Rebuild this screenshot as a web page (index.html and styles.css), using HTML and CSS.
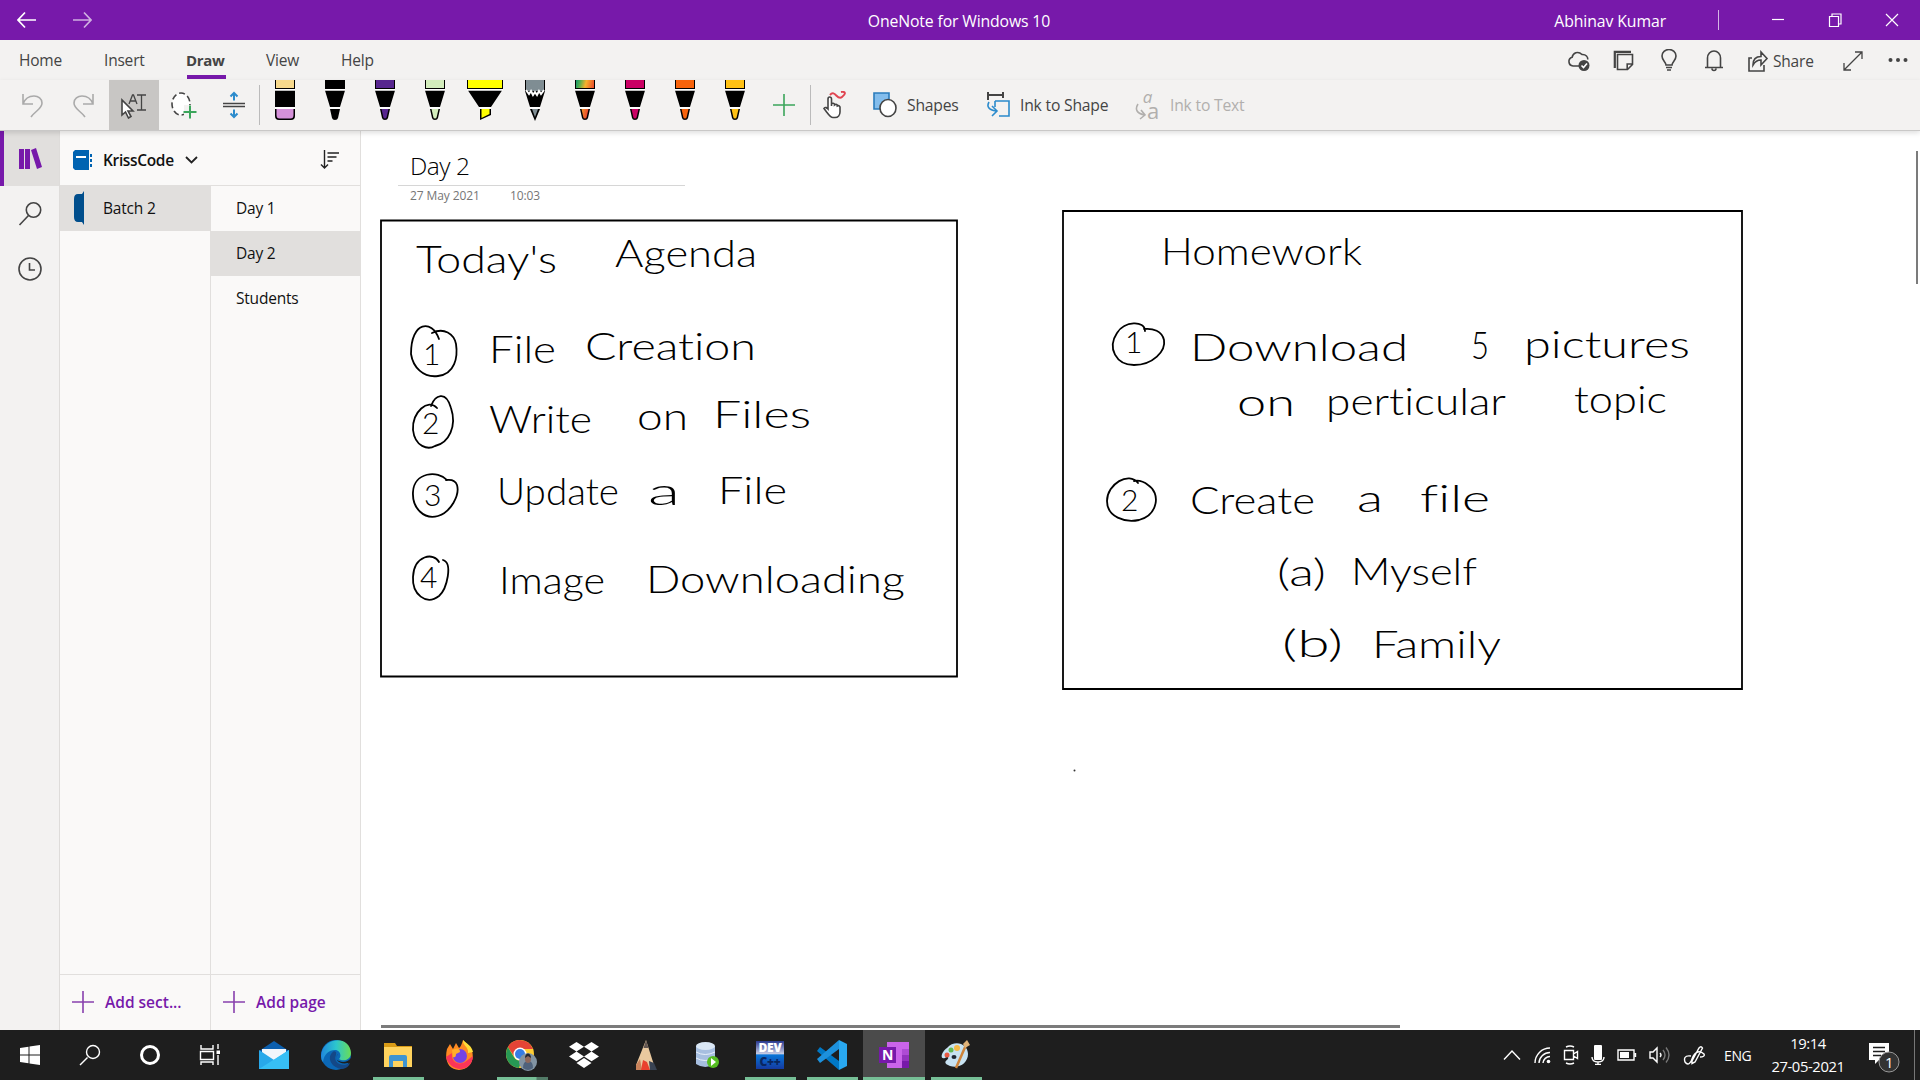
FILE: index.html
```html
<!DOCTYPE html>
<html lang="en">
<head>
<meta charset="utf-8">
<title>OneNote for Windows 10</title>
<link rel="stylesheet" href="styles.css">
</head>
<body>
<div class="app">
  <header class="titlebar">
    <div class="nav">
      <svg width="20" height="18" viewBox="0 0 20 18"><path d="M19 9H1M8 1.500L1 9l7 7.500"/></svg>
      <svg class="dim" width="20" height="18" viewBox="0 0 20 18"><path d="M1 9h18M12 1.500L19 9l-7 7.500"/></svg>
    </div>
    <div class="app-title">OneNote for Windows 10</div>
    <div class="account">Abhinav Kumar</div>
    <div class="window-buttons">
      <i class="divider"></i>
      <svg width="14" height="14" viewBox="0 0 14 14"><path d="M1 6.500h12"/></svg>
      <svg width="14" height="14" viewBox="0 0 14 14"><path d="M1.500 3.500h9v10h-9zM4 3.500V1h9v10h-2.500"/></svg>
      <svg width="14" height="14" viewBox="0 0 14 14"><path d="M1 1l12 12M13 1L1 13"/></svg>
    </div>
  </header>

  <div class="tabs">
    <nav class="tab-list">
      <span class="tab home">Home</span><span class="tab insert">Insert</span><span class="tab draw active">Draw</span><span class="tab view">View</span><span class="tab help">Help</span>
    </nav>
    <div class="tab-tools">
      <svg width="24" height="24" viewBox="0 0 24 24"><path d="M12 17H6a4.500 4.500 0 0 1-.8-8.800C5.800 4 11 1.500 15 5.500c4-.3 6 2.500 5.800 5"/><circle cx="17" cy="16.500" r="5.500" class="fill"/><path class="white" d="M14.500 16.500l2 2 3.500-4"/></svg>
      <svg width="24" height="24" viewBox="0 0 24 24"><path d="M5.500 5.500h15v10l-5 5h-10zM20.500 15h-5.300v5.300"/><path d="M2.800 19V2.800H19" stroke-width="2.200"/></svg>
      <svg width="24" height="24" viewBox="0 0 24 24"><path d="M9 16c0-3-4-4.500-4-9a7 6.500 0 0 1 14 0c0 4.500-4 6-4 9zM9 18.500h6M10 21h4"/></svg>
      <svg width="24" height="24" viewBox="0 0 24 24"><path d="M3 18.500h18M5.500 18.500V9a6.500 7 0 0 1 13 0v9.500M10 19.500a2 2 0 0 0 4 0"/></svg>
      <div class="share"><svg width="22" height="24" viewBox="0 0 22 24"><path d="M5 9H2v13h15v-6M6 16c0-6 3-8.500 8-8.500V3l6 6.500-6 6.500v-5c-4 0-6 1.500-8 5z"/></svg><span>Share</span></div>
      <svg width="24" height="24" viewBox="0 0 24 24"><path d="M3 21L21 3M14 3h7v7M3 14v7h7" stroke-width="1.300"/></svg>
      <svg width="24" height="24" viewBox="0 0 24 24"><g class="fill"><circle cx="4.500" cy="11" r="2"/><circle cx="12" cy="11" r="2"/><circle cx="19.500" cy="11" r="2"/></g></svg>
    </div>
  </div>

  <div class="toolbar">
    <button class="tool faded"><svg width="26" height="28" viewBox="0 0 26 28"><path d="M3 3v10h10M3 13C7 2 22 3 22 12c0 6-7 8-11 14"/></svg></button>
    <button class="tool faded"><svg width="26" height="28" viewBox="0 0 26 28"><path d="M23 3v10H13M23 13C19 2 4 3 4 12c0 6 7 8 11 14"/></svg></button>
    <button class="tool pressed"><svg width="28" height="28" viewBox="0 0 28 28"><path d="M17 4h9M17 19h9M21.500 4v15M9 13l3.500-9h1L17 13M10.500 10h5" stroke-width="1.300"/><path class="cursor" d="M2 9v15l3.500-3 3 6 2.500-1.500-3-5.500h5z"/></svg></button>
    <button class="tool"><svg width="28" height="28" viewBox="0 0 28 28"><ellipse cx="11" cy="13" rx="9" ry="11" stroke-dasharray="6 3" fill="#fff"/><path d="M14 14h12v13H14z" fill="#f3f2f1" stroke="none"/><path class="green" d="M20 14.500v13M13.500 21H26.500" stroke-width="2"/></svg></button>
    <button class="tool"><svg width="24" height="28" viewBox="0 0 24 28"><path d="M1 12.500h22M1 15.500h22"/><path class="blue" d="M12 9.500V2M8.500 5.500L12 2l3.500 3.500M12 18.500V26M8.500 22.500L12 26l3.500-3.500" stroke-width="2"/></svg></button>
    <i class="sep"></i>
    <div class="pens">
      <svg viewBox="0 0 50 41"><path d="M15 0h20v9H15z"/><path d="M16 0h18v8H16z" fill="#f7d98c"/><path d="M15 10.500h20V27H15zM15 29h20v7q0 4-4 4H19q-4 0-4-4z"/><path d="M16.500 29h17v6q0 3.500-3 3.500h-11q-3 0-3-3.500z" fill="#d591d9"/><use href="#bands"/></svg>
      <svg viewBox="0 0 50 41" style="--ink:#000"><use href="#pen"/></svg>
      <svg viewBox="0 0 50 41" style="--ink:#57268f"><use href="#pen"/></svg>
      <svg viewBox="0 0 50 41" style="--ink:#d3edbc"><use href="#pen"/></svg>
      <svg viewBox="0 0 50 41"><path d="M7 0h36v9H7z"/><path d="M8 0h34v8H8z" fill="#ff0"/><path d="M8 10.500h34L31 27H19zM20 29h11v6l-11 5z"/><path d="M21.500 29h8v5l-8 4z" fill="#ff0"/><path d="M7 9h36v1.500H7zM19 27h12v2H19z" fill="#fff"/></svg>
      <svg viewBox="0 0 50 41"><path d="M15 0h20v11l-5 16H20l-5-16z"/><path d="M16 0h18v11H16z" fill="#7f8d93"/><path d="M16 10l3 4 2-3 2 4 2-3 2 3 2-4 2 3 3-4" fill="none" stroke="#fff" stroke-width="2"/><path d="M20 29h10l-5 12z"/><path d="M22 29h6l-3 8z" fill="#7f8d93"/><path d="M19.500 27h11v2h-11z" fill="#fff"/></svg>
      <svg viewBox="0 0 50 41" style="--ink:url(#rainbow)"><use href="#pen"/></svg>
      <svg viewBox="0 0 50 41" style="--ink:#ca0064"><use href="#pen"/></svg>
      <svg viewBox="0 0 50 41" style="--ink:#f7630c"><use href="#pen"/></svg>
      <svg viewBox="0 0 50 41" style="--ink:#ffc114"><use href="#pen"/></svg>
    </div>
    <button class="tool plus"><svg width="24" height="24" viewBox="0 0 24 24"><path class="green" d="M12 1v22M1 12h22"/></svg></button>
    <i class="sep"></i>
    <button class="tool plus"><svg width="26" height="28" viewBox="0 0 26 28"><path d="M6 18V8q0-2 1.700-2t1.800 2v7-2q1.500-1.500 3 0v1q1.500-1.300 2.800 0v1q2-1 2.700 1v5c0 3-2 5.500-5 5.500h-2c-3 0-5-4-9-9 1.500-2 3-.5 4 .5z" fill="#fff"/><path d="M8 4c5-6 7 6 12 2 4-3 4-6-1-5" stroke="#e04450" stroke-width="2"/></svg></button>
    <div class="action shapes"><svg width="24" height="26" viewBox="0 0 24 26"><path d="M1 1h15v16H1z" fill="#83bdec" stroke="#2b7cbc"/><ellipse cx="15" cy="16" rx="8" ry="8.500" fill="#fff"/></svg><span>Shapes</span></div>
    <div class="action ink-shape"><svg width="24" height="26" viewBox="0 0 24 26"><path d="M1 3h17M2 0v8M17 0v6" stroke-width="2"/><path class="blue" d="M9 9h14v15H13M9 9v6M3 10q-4 7 7 9M6 14l5 5-5 5"/></svg><span>Ink to Shape</span></div>
    <div class="action ink-text disabled"><div class="letters"><i>a</i><b>a</b><svg width="12" height="18" viewBox="0 0 12 18"><path d="M3 1q-5 8 6 11M6 7l4 5-5 4"/></svg></div><span>Ink to Text</span></div>
  </div>

  <main class="workspace">
    <aside class="rail">
      <div class="rail-item selected"><svg width="26" height="26" viewBox="0 0 26 26"><path d="M2 3h5v20H2zM8 3h5v20H8zM14 4l5-2 6 19-5 2z" fill="#7719aa" stroke="none"/></svg></div>
      <div class="rail-item"><svg width="26" height="26" viewBox="0 0 26 26"><circle cx="16.500" cy="9" r="7.200"/><path d="M11.500 14.500L2.500 24"/></svg></div>
      <div class="rail-item"><svg width="26" height="26" viewBox="0 0 26 26"><circle cx="13" cy="13" r="11"/><path d="M12.500 7v7H18"/></svg></div>
    </aside>
    <section class="notebook">
      <div class="notebook-head">
        <svg class="book" width="20" height="20" viewBox="0 0 20 20"><path d="M0 2l2-2h14v20H2l-2-2z" fill="#0063b1"/><path d="M3 6h10v2H3z" fill="#fff"/><path d="M17 4h2v3h-2zM17 9h2v3h-2zM17 14h2v3h-2z" fill="#0063b1"/></svg>
        <strong>KrissCode</strong>
        <svg class="chev" width="13" height="8" viewBox="0 0 13 8"><path d="M1 1l5.500 5.500L12 1" stroke-width="1.800"/></svg>
        <svg class="sort" width="20" height="20" viewBox="0 0 20 20"><path d="M4.500 0v18M1 14.500L4.500 18 8 14.500M7.500 3H19M7.500 7h9M7.500 11h5" stroke-width="1.400"/></svg>
      </div>
      <div class="lists">
        <div class="column sections">
          <div class="item selected"><svg width="12" height="34" viewBox="0 0 12 34"><path d="M11 0v34L9 31H5q-4 0-4-5V8q0-5 4-5h4z" fill="#004e8c"/></svg><span>Batch 2</span></div>
          <div class="add"><svg width="22" height="22" viewBox="0 0 22 22"><path d="M11 0v22M0 11h22"/></svg><span>Add sect...</span></div>
        </div>
        <div class="column pages">
          <div class="item">Day 1</div>
          <div class="item selected">Day 2</div>
          <div class="item">Students</div>
          <div class="add"><svg width="22" height="22" viewBox="0 0 22 22"><path d="M11 0v22M0 11h22"/></svg><span>Add page</span></div>
        </div>
      </div>
    </section>
    <section class="page">
      <div class="page-head"><h1>Day 2</h1><div class="meta"><span>27 May 2021</span><span>10:03</span></div></div>
      <svg class="ink" viewBox="361 131 1559 899">
        <g class="stroke">
          <path d="M381 220.500H957V676.500H381z"/>
          <path d="M1063 211H1742V689H1063z"/>
          <path d="M439 339c-7-20-28-18-28 15 2 13 12 24 27 22 17-2 20-19 18-32-2-10-12-17-24-11"/>
          <path d="M437 408c-9-10-25 4-24 22 2 17 15 20 22 16 14-3 22-20 16-38-5-18-16-13-20-2"/>
          <path d="M447 480c-9-10-33-8-34 12-1 16 11 28 25 24 13-4 22-21 19-31-1-3-4-6-11-5"/>
          <path d="M439 562c-5-10-25-7-26 15-1 17 13 29 26 19 8-7 14-33 4-36"/>
          <path d="M1145 331c0-11-21-10-28 2-10 15-1 32 17 32 19 0 32-14 30-25-2-9-11-12-20-11"/>
          <path d="M1138 483c-9-12-31 1-31 18 0 16 18 22 32 19 19-5 22-27 9-35-5-4-9-5-14-4"/>
        </g>
        <g class="hand">
          <text x="416" y="273" textLength="141" lengthAdjust="spacingAndGlyphs">Today's</text><text x="615" y="267" textLength="142" lengthAdjust="spacingAndGlyphs">Agenda</text>
          <text class="num" x="423" y="365">1</text><text x="489" y="363" textLength="67" lengthAdjust="spacingAndGlyphs">File</text><text x="585" y="360" textLength="171" lengthAdjust="spacingAndGlyphs">Creation</text>
          <text class="num" x="422" y="434">2</text><text x="489" y="433" textLength="103" lengthAdjust="spacingAndGlyphs">Write</text><text x="637" y="430" textLength="51" lengthAdjust="spacingAndGlyphs">on</text><text x="713" y="428" textLength="98" lengthAdjust="spacingAndGlyphs">Files</text>
          <text class="num" x="424" y="506">3</text><text x="497" y="505" textLength="122" lengthAdjust="spacingAndGlyphs">Update</text><text x="648" y="505" textLength="32" lengthAdjust="spacingAndGlyphs">a</text><text x="718" y="504" textLength="69" lengthAdjust="spacingAndGlyphs">File</text>
          <text class="num" x="420" y="588">4</text><text x="499" y="594" textLength="106" lengthAdjust="spacingAndGlyphs">Image</text><text x="646" y="593" textLength="259" lengthAdjust="spacingAndGlyphs">Downloading</text>
          <text x="1161" y="265" textLength="201" lengthAdjust="spacingAndGlyphs">Homework</text>
          <text class="num" x="1125" y="353">1</text><text x="1190" y="361" textLength="218" lengthAdjust="spacingAndGlyphs">Download</text><text x="1471" y="359" textLength="18" lengthAdjust="spacingAndGlyphs">5</text><text x="1524" y="358" textLength="166" lengthAdjust="spacingAndGlyphs">pictures</text>
          <text x="1237" y="416" textLength="58" lengthAdjust="spacingAndGlyphs">on</text><text x="1326" y="415" textLength="180" lengthAdjust="spacingAndGlyphs">perticular</text><text x="1574" y="413" textLength="93" lengthAdjust="spacingAndGlyphs">topic</text>
          <text class="num" x="1121" y="511">2</text><text x="1190" y="514" textLength="125" lengthAdjust="spacingAndGlyphs">Create</text><text x="1357" y="512" textLength="26" lengthAdjust="spacingAndGlyphs">a</text><text x="1420" y="512" textLength="70" lengthAdjust="spacingAndGlyphs">file</text>
          <text x="1277" y="586" textLength="49" lengthAdjust="spacingAndGlyphs">(a)</text><text x="1351" y="585" textLength="126" lengthAdjust="spacingAndGlyphs">Myself</text>
          <text x="1282" y="657" textLength="61" lengthAdjust="spacingAndGlyphs">(b)</text><text x="1372" y="658" textLength="129" lengthAdjust="spacingAndGlyphs">Family</text>
        </g>
        <circle cx="1074.500" cy="770.500" r="1" fill="#333"/>
      </svg>
      <i class="vscroll"></i><i class="hscroll"></i>
    </section>
  </main>

  <footer class="taskbar">
    <div class="launch">
      <div class="task sys"><svg width="20" height="20" viewBox="0 0 20 20"><path d="M0 3l8.500-1.200v7.700H0zM9.500 1.600L20 0v9.500H9.500zM0 10.500h8.500v7.700L0 17zM9.500 10.500H20V20L9.500 18.400z" fill="#fff"/></svg></div>
      <div class="task sys"><svg width="22" height="22" viewBox="0 0 22 22"><path d="M8.500 13.500L1 21" class="w"/><circle cx="14" cy="8" r="6.500" class="w"/></svg></div>
      <div class="task sys"><svg width="22" height="22" viewBox="0 0 22 22"><circle cx="11" cy="11" r="8.500" class="w ring"/></svg></div>
      <div class="task sys"><svg width="22" height="22" viewBox="0 0 22 22"><path class="w" d="M2 1v4h12V1M1.500 7.500h13v8h-13zM2 21v-3h12v3M19 0v5M19 11v10"/><path d="M17.500 6.500h3.500v3.500h-3.500z" fill="#fff"/></svg></div>
      <div class="task"><svg width="30" height="30" viewBox="0 0 30 30"><path d="M0 11L15 1l15 10v8H0z" fill="#0c5fae"/><path d="M3 9h24v12H3z" fill="#f2f6fb"/><path d="M0 10l15 10 15-10v19H0z" fill="#28a8ea"/><path d="M30 10v19H0z" fill="#37bff5"/></svg></div>
      <div class="task"><svg width="30" height="30" viewBox="0 0 30 30"><defs><linearGradient id="edge"><stop stop-color="#2086dc"/><stop offset=".5" stop-color="#2cc6ce"/><stop offset="1" stop-color="#6add55"/></linearGradient></defs><circle cx="15" cy="15" r="15" fill="#0b67b5"/><path d="M0 16C1-3 29-6 30 13c0 7-8 9-12 6 3-3 1-9-4-9C8 10 3 14 2 22Q0 20 0 16z" fill="url(#edge)"/><path d="M13 11c-9 6-2 18 9 18 4-1 6-3 7-6-5 3-12 2-14-2-2-4 1-6 0-9z" fill="#144887"/><path d="M17 14c-3 3-2 6 1 7 4 2 9 1 12-3v5h-3c-9 2-15-4-10-9z" fill="#1e1e1e"/></svg></div>
      <div class="task open"><svg width="28" height="26" viewBox="0 0 28 26"><path d="M0 1h11l2 3h15v20H0z" fill="#d99b16"/><path d="M0 5h28v20H0z" fill="#ffd35e"/><path d="M5 25V15q0-2 2-2h14q2 0 2 2v10h-4v-6H9v6z" fill="#3e94d1"/></svg></div>
      <div class="task"><svg width="30" height="30" viewBox="0 0 30 30"><path d="M2 9l3-5 3 5 3-6 3 5c2-1 3-5 4-8 3 3 7 5 9 11 3 10-3 19-13 19S-1 21 2 9z" fill="#ff8a22"/><path d="M1 17c3 15 26 17 27-1l-8 6c-8 4-14-1-13-9z" fill="#fa3558"/><path d="M18 0c-1 5 6 7 5 13l5-1c-1-6-6-8-10-12z" fill="#ffdd38"/><circle cx="15" cy="16" r="7" fill="#7542e4"/><path d="M7 10q8-4 8 2l-4 2q0 4-3 3z" fill="#ffaf29"/></svg></div>
      <div class="task open stack"><svg width="32" height="32" viewBox="0 0 32 32"><circle cx="14" cy="15" r="14" fill="#ffcd33"/><path d="M1.900 8A14 14 0 0 1 27 10H14l-6 7z" fill="#e54436"/><path d="M1.900 8l6 10q3 5 8 3l-3 8A14 14 0 0 1 1.900 8z" fill="#279954"/><circle cx="14" cy="15" r="6.500" fill="#fff"/><circle cx="14" cy="15" r="5" fill="#367de4"/><ellipse cx="22" cy="23" rx="9" ry="9" fill="#8294a3"/><path d="M17 29q0-7 5-7t5 7q-5 4-10 0z" fill="#4f627b"/><ellipse cx="22" cy="20" rx="3" ry="4" fill="#8e685b"/><path d="M19 19c0-6 6-6 6 0l-3-2z" fill="#242832"/></svg></div>
      <div class="task"><svg width="30" height="28" viewBox="0 0 30 28"><path d="M7.500 1l7.500 4.800-7.500 4.800L0 5.800zM22.500 1L30 5.800l-7.500 4.800L15 5.800zM7.500 10.600l7.500 4.800-7.500 4.800L0 15.400zM22.500 10.600l7.500 4.800-7.500 4.800-7.500-4.800zM15 17l7.500 5-7.500 5-7.500-5z" fill="#fff"/></svg></div>
      <div class="task"><svg width="22" height="30" viewBox="0 0 22 30"><path d="M11 0l8 25-4 5H3L1 25z" fill="#e9c99f"/><path d="M11 0l2.500 8h-5z" fill="#635752"/><path d="M1 25l4-6 2 11H1z" fill="#c9825a"/><path d="M6 30l2-10 4 2 3 8z" fill="#e9412e"/><path d="M14 21l5 2 3 7h-7z" fill="#394353"/></svg></div>
      <div class="task"><svg width="26" height="28" viewBox="0 0 26 28"><path d="M1 5v18q9 6 19 0V5z" fill="#a7bfe0"/><ellipse cx="10.500" cy="5" rx="9.500" ry="4" fill="#dae7f5"/><path d="M1 11q9 5 19 0M1 17q9 5 19 0" fill="none" stroke="#e7f0fb"/><circle cx="18" cy="21" r="6" fill="#56bd22"/><path d="M16 17l5 4-5 4z" fill="#fff"/></svg></div>
      <div class="task open"><div class="dev"><b>DEV</b><b>C++</b></div></div>
      <div class="task open"><svg width="30" height="30" viewBox="0 0 30 30"><path d="M22 0v30L0 11l3-4 19 14z" fill="#0078c5"/><path d="M22 0v9L3 23l-3-4z" fill="#1d91dc"/><path d="M22 0l8 4v22l-8 4z" fill="#29a8f0"/></svg></div>
      <div class="task open current"><svg width="30" height="26" viewBox="0 0 30 26"><path d="M8 0h22v26H8z" fill="#ca64ea"/><path d="M23 7h7v6h-7z" fill="#ae4bd5"/><path d="M23 13h7v6h-7z" fill="#9332bf"/><path d="M23 19h7v7h-7z" fill="#7719aa"/><path d="M0 5h17v16H0z" fill="#7719aa"/><text x="3" y="18" class="n">N</text></svg></div>
      <div class="task open"><svg width="30" height="30" viewBox="0 0 30 30"><path d="M6 8C14-1 27 4 27 14c0 9-9 15-18 12-5-2-6-4-3-6 3-3 0-4-2-2-6 2-3-7 2-10z" fill="#c8e3f2"/><ellipse cx="13" cy="17" rx="2.500" ry="2" fill="#1e2733"/><circle cx="6" cy="15" r="2.500" fill="#e85a42"/><circle cx="10" cy="10" r="2.500" fill="#62ba53"/><circle cx="16" cy="8" r="3" fill="#f5b946"/><path d="M25 5L15 28" stroke="#cf853b" stroke-width="2.500"/><path d="M22 4l4-4 3 5-5 3z" fill="#dfb278"/></svg></div>
    </div>
    <div class="tray">
      <svg width="18" height="20" viewBox="0 0 18 20"><path class="w" d="M1 14.500L9 6l8 8.500"/></svg>
      <svg width="18" height="20" viewBox="0 0 18 20"><path class="w" d="M2 18A15 15 0 0 1 17 3M6 18A11 11 0 0 1 17 7.500M10 18a7 7 0 0 1 7-6.500"/><circle cx="15.500" cy="16.500" r="1.800" fill="#fff"/></svg>
      <svg width="16" height="20" viewBox="0 0 16 20"><path class="w" d="M1.500 5.500h9v9h-9zM10.500 9l4-2.500v7l-4-2.500M3 2q4-2 8 0M3 18q4 2 8 0"/></svg>
      <svg width="14" height="20" viewBox="0 0 14 20"><rect x="3" y="0" width="8" height="15" rx="1" fill="#fff"/><path class="w" d="M1 12q0 5 6 5t6-5M7 17v3M4 19.500h6"/></svg>
      <svg width="20" height="20" viewBox="0 0 20 20"><path class="w" d="M1 5h16v10H1zM18.500 8v4"/><path d="M3 7h9v6H3z" fill="#fff"/></svg>
      <svg width="22" height="20" viewBox="0 0 22 20"><path class="w" d="M1 7h3l4-4v14l-4-4H1zM11 8q2 2 0 4"/><path class="w low" d="M14 5q4 5 0 10M17 2.500q6 7.500 0 15"/></svg>
      <svg width="22" height="20" viewBox="0 0 22 20"><path class="w" d="M9 16L16 3q2-2.500 3.500 0L12 17l-3 1.500zM8 11c-7-1-7 3-6 6 3 4 6 1 7-3 3-8 8-9 12-5 1 2-1 3-4 3"/></svg>
      <span class="lang">ENG</span>
      <div class="clock"><span>19:14</span><span>27-05-2021</span></div>
      <div class="notice"><svg width="32" height="32" viewBox="0 0 32 32"><path d="M1 2h20v17H11l-4 4v-4H1z" fill="#fff"/><path d="M5 6.500h12M5 10.500h12M5 14.500h8" stroke="#1e1e1e" stroke-width="1.300"/><circle cx="21" cy="21" r="10" fill="#333" stroke="#999"/><text x="17" y="27" class="one">1</text></svg></div>
      <i class="edge-line"></i>
    </div>
  </footer>
</div>
<svg width="0" height="0" class="defs">
  <defs>
    <linearGradient id="rainbow" gradientUnits="userSpaceOnUse" x1="15" y1="0" x2="35" y2="5"><stop stop-color="#008c74"/><stop offset=".25" stop-color="#4fae50"/><stop offset=".55" stop-color="#f7b22c"/><stop offset="1" stop-color="#e8442c"/></linearGradient>
    <path id="bands" d="M15 9h20v1.500H15zM15 27h20v2H15z" fill="#fff"/>
    <g id="pen"><path d="M15 0h20v9H15z"/><path d="M16 0h18v8H16z" fill="var(--ink)"/><path d="M15 10.500h20L30 27H20zM20 29h10l-2 9q-.5 2-3 2t-3-2z"/><path d="M21.500 29h7l-1.800 8q-.3 1.500-1.700 1.500t-1.700-1.500z" fill="var(--ink)"/><path d="M15 9h20v1.500H15zM19.500 27h11v2h-11z" fill="#fff"/></g>
  </defs>
</svg>
</body>
</html>
```
FILE: styles.css
```css
* { box-sizing: border-box; }
body { margin: 0; font-family: "Open Sans", "Noto Sans", sans-serif; font-size: 15.5px; letter-spacing: -0.2px; color: #111; overflow: hidden; }
svg { display: block; flex: none; }
.defs { position: absolute; }
.app { width: 1920px; height: 1080px; display: grid; grid-template-rows: 40px 40px 51px 899px 50px; }

.titlebar { background: #7719aa; color: #fff; display: grid; grid-template-columns: 759px 400px 507px 254px; align-items: center; }
.titlebar svg { fill: none; stroke: #fff; stroke-width: 1.2; }
.nav { display: flex; gap: 35px; padding-left: 17px; }
.nav svg { stroke-width: 1.7; }
.nav .dim { opacity: .65; }
.app-title { text-align: center; padding-top: 2px; font-size: 15.8px; letter-spacing: -.15px; }
.account { text-align: right; padding-top: 2px; font-size: 15.8px; letter-spacing: -.1px; }
.window-buttons { display: flex; align-items: center; padding-left: 52px; }
.window-buttons svg { margin-right: 43px; }
.divider { width: 1px; height: 20px; background: #d5b5e5; margin-right: 52px; flex: none; }

.tabs { background: #f3f2f1; display: flex; justify-content: space-between; color: #444; }
.tab-list { display: flex; padding-left: 19px; }
.tab { height: 39px; line-height: 41px; font-size: 15.5px; }
.home { width: 85px; } .insert { width: 82px; } .draw { width: 80px; } .view { width: 75px; }
.active { font-weight: 700; font-size: 15px; letter-spacing: -0.3px; display: flex; flex-direction: column; }
.active::after { content: ""; width: 39px; height: 4px; flex: none; margin: -6px 0 0 1px; background: #7719aa; }
.tab-tools { display: flex; align-items: center; padding: 1px 10px 0 0; }
.tab-tools svg { fill: none; stroke: #444; stroke-width: 1.6; margin-right: 21px; }
.tab-tools svg .fill, .tab-tools .fill { fill: #444; stroke: none; }
.tab-tools .white { stroke: #fff; }
.tab-tools > svg:last-child { margin-right: 0; }
.share { display: flex; align-items: center; width: 94px; }
.share svg { margin-right: 4px; }

.toolbar { background: #f3f2f1; border-bottom: 1px solid #c9c8c7; display: flex; padding-left: 8px; color: #444; position: relative; z-index: 2; box-shadow: 0 2px 5px rgba(0,0,0,.13); }
.tool { width: 50px; height: 50px; padding: 0; border: 0; background: none; display: grid; place-items: center; flex: none; }
.tool svg, .action svg { fill: none; stroke: #444; stroke-width: 1.6; }
.tool.faded svg { stroke: #aaa; }
.pressed { background: #c8c6c4; margin-left: 1px; }
.tool .cursor { fill: #fff; }
.tool.plus { padding-right: 3px; }
svg .green { stroke: #3ba55b; }
svg .blue { stroke: #2b8bcc; }
.sep { width: 1px; height: 40px; background: #bbb; margin-top: 5px; flex: none; }
.pens { display: flex; }
.pens svg { width: 50px; height: 41px; }
.action { display: flex; align-items: center; gap: 10px; height: 50px; font-size: 15.7px; }
.shapes { margin-left: 12px; width: 113px; }
.ink-shape { width: 149px; }
.disabled { color: #b1afad; }
.action.disabled svg { stroke: #b1afad; }
.letters { width: 25px; height: 30px; display: grid; grid-template: 13px 17px / 11px 14px; line-height: 13px; }
.letters i { grid-area: 1 / 1 / 2 / 3; text-align: center; font-size: 17px; }
.letters b { grid-area: 2 / 2; font-weight: 400; font-size: 22px; text-align: center; line-height: 15px; }
.letters svg { grid-area: 2 / 1; }

.workspace { display: grid; grid-template-columns: 60px 301px 1fr; }
.rail { background: #f3f2f1; border-right: 1px solid #dedcda; }
.rail-item { height: 55px; display: grid; place-items: center; padding-left: 1px; }
.rail-item svg { fill: none; stroke: #444; stroke-width: 1.6; }
.rail .selected { background: #e1dfdd; border-left: 4px solid #7719aa; padding: 0 3px 0 0; }
.notebook { background: #faf9f8; border-right: 1px solid #e1dfdd; display: grid; grid-template-rows: 55px 1fr; }
.notebook-head { border-bottom: 1px solid #e1dfdd; display: flex; align-items: center; padding: 3px 20px 0 13px; }
.notebook-head strong { width: 73px; margin: 0 9px 0 10px; font-weight: 600; font-size: 15.5px; letter-spacing: -.35px; }
.notebook-head svg { fill: none; stroke: #222; }
.notebook-head .book { stroke: none; }
.notebook-head .sort { margin-left: auto; }
.lists { display: grid; grid-template-columns: 151px 1fr; }
.column { display: flex; flex-direction: column; }
.sections { border-right: 1px solid #e1dfdd; }
.item { height: 45px; display: flex; align-items: center; padding-bottom: 1px; }
.item.selected { background: #e1dfdd; }
.sections .item { padding-left: 13px; gap: 18px; }
.pages .item { padding-left: 25px; }
.add { margin-top: auto; height: 56px; border-top: 1px solid #e1dfdd; color: #7719aa; display: flex; align-items: center; gap: 11px; padding: 0 0 2px 12px; font-weight: 600; letter-spacing: 0; }
.add svg { stroke: #8840ad; stroke-width: 1.6; }

.page { background: #fff; position: relative; }
.page-head { width: 324px; padding: 18px 0 0 37px; }
h1 { margin: 0; height: 37px; border-bottom: 1px solid #d6d6d6; font: 300 24.5px/33px "Open Sans", sans-serif; letter-spacing: -.5px; padding-left: 12px; color: #000; }
.meta { display: flex; padding: 1px 0 0 12px; color: #767676; font-size: 12px; line-height: 18px; letter-spacing: -.1px; }
.meta span:first-child { width: 100px; }
.ink { position: absolute; inset: 0; width: 1559px; height: 899px; }
.stroke { fill: none; stroke: #000; stroke-width: 1.8; stroke-linecap: round; }
.hand { font-family: Lato, sans-serif; font-weight: 300; font-size: 38px; letter-spacing: 0; font-variant-ligatures: none; fill: #000; }
.num { font-size: 30px; }
.vscroll { position: absolute; right: 2px; top: 20px; width: 2px; height: 133px; background: #7b7b7b; }
.hscroll { position: absolute; left: 20px; bottom: 2px; width: 1019px; height: 3px; background: #7b7b7b; }

.taskbar { background: #1e1e1e; color: #fff; display: flex; justify-content: space-between; }
.launch { display: flex; }
.task { width: 62px; display: grid; place-items: center; height: 50px; padding: 0 5.500px; position: relative; }
.task.sys { width: 60px; }
.task:nth-child(4) { margin-right: 3px; }
.w { fill: none; stroke: #fff; stroke-width: 1.4; }
.ring { stroke-width: 3; }
.low { opacity: .4; }
.open::after { content: ""; position: absolute; left: 5.500px; right: 5.500px; bottom: 0; height: 3px; background: #76bf96; }
.stack::after { background: linear-gradient(90deg, #76bf96 39px, #527b67 40px); }
.current { background: #4b4b4b; }
.current::after { left: 0; right: 0; }
.dev { width: 28px; height: 28px; background: linear-gradient(#28388e, #c4cae3 45%, #0874d7 50%, #153aa0); font: 700 12px/14px "Open Sans", sans-serif; text-align: center; }
.dev b { display: block; height: 14px; }
.dev b + b { color: #092660; }
.n { fill: #fff; font-size: 14px; font-weight: 700; }
.tray { display: flex; align-items: center; }
.tray > svg { margin-right: 12px; }
.lang { width: 45px; margin-left: 7px; font-size: 14px; letter-spacing: -.4px; }
.clock { display: grid; grid-template-rows: 23px 23px; text-align: center; width: 78px; font-size: 14.8px; line-height: 22px; letter-spacing: -.4px; }
.notice { margin-left: 21px; padding-top: 3px; }
.one { fill: #fff; font-size: 15px; }
.edge-line { width: 1px; height: 50px; background: #777; margin: 0 5px 0 14px; }
```
